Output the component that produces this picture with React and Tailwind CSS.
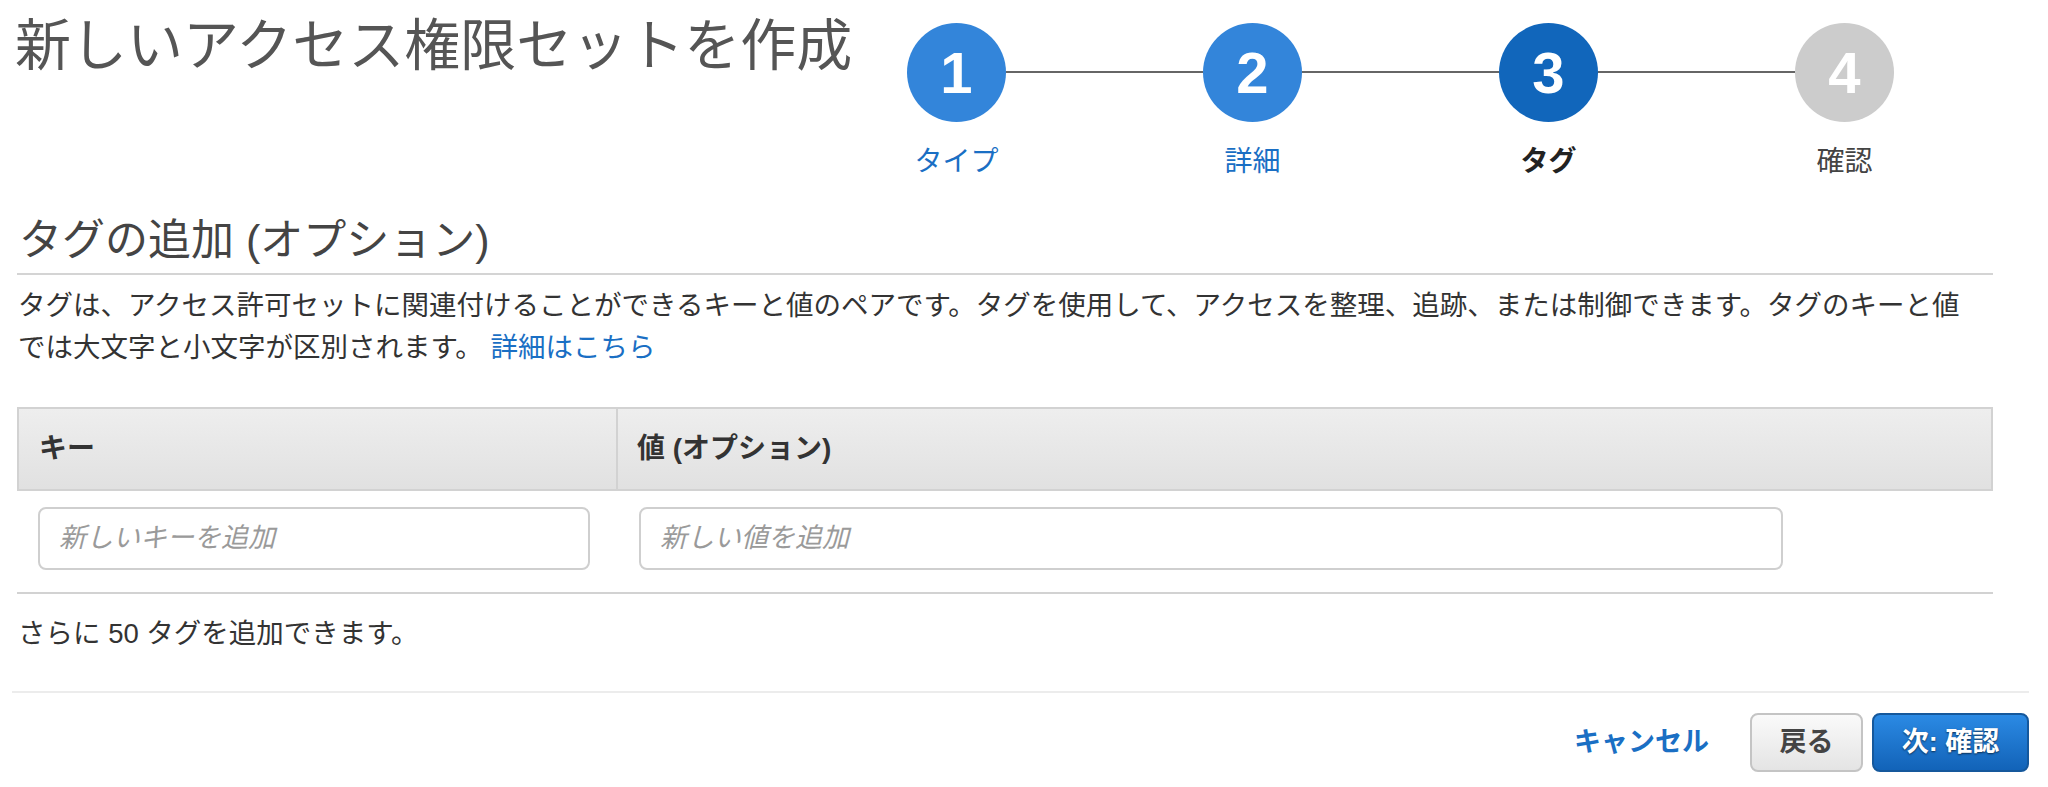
import React from "react";

const FONT = "font-['Liberation_Sans','Noto_Sans_CJK_JP',sans-serif]";

function Step({ n, label, circle, labelCls }) {
  return (
    <div className="flex flex-col items-center w-[99px] shrink-0">
      <div
        className={`w-[99px] h-[99px] rounded-full flex items-center justify-center text-white font-bold text-[58px] leading-none ${circle}`}
      >
        {n}
      </div>
      <div className={`mt-[23px] whitespace-nowrap text-[28px] leading-[34px] ${labelCls}`}>
        {label}
      </div>
    </div>
  );
}

function Line() {
  return <div className="w-[197px] h-[2px] bg-[#666] mt-[48px] shrink-0" />;
}

export default function App() {
  return (
    <div className={`${FONT} bg-white w-[2048px] h-[787px] overflow-hidden text-[#333]`}>
      <div className="ml-[17px] w-[1976px]">
        {/* header */}
        <div className="flex items-start justify-between">
          <h1 className="mt-[18px] -ml-[2px] text-[56px] leading-[56px] text-[#555] font-normal whitespace-nowrap">
            新しいアクセス権限セットを作成
          </h1>
          <div className="flex items-start mt-[23px] mr-[99px]">
            <Step n="1" label="タイプ" circle="bg-[#3385da]" labelCls="text-[#1a6fc4]" />
            <Line />
            <Step n="2" label="詳細" circle="bg-[#3385da]" labelCls="text-[#1a6fc4]" />
            <Line />
            <Step n="3" label="タグ" circle="bg-[#1166bb]" labelCls="text-[#222] font-bold" />
            <Line />
            <Step n="4" label="確認" circle="bg-[#cccccc]" labelCls="text-[#444]" />
          </div>
        </div>

        {/* section heading */}
        <h2 className="mt-[36px] pb-[8px] border-b-2 border-[#d4d4d4] text-[43px] leading-[50px] text-[#444] font-normal pl-[2px]">
          タグの追加 (オプション)
        </h2>

        <p className="mt-[10px] text-[27.5px] leading-[42px] text-[#333] pl-[1px]">
          タグは、アクセス許可セットに関連付けることができるキーと値のペアです。タグを使用して、アクセスを整理、追跡、または制御できます。タグのキーと値
          <br />
          では大文字と小文字が区別されます。 <a className="text-[#1a6fc4]" href="#">詳細はこちら</a>
        </p>

        {/* table */}
        <div className="mt-[38px]">
          <div className="flex h-[84px] border-2 border-[#d2d2d2] bg-gradient-to-b from-[#eeeeee] to-[#e1e1e1]">
            <div className="w-[599px] border-r-2 border-[#d2d2d2] flex items-center pl-[20px] text-[28px] font-bold text-[#333]">
              キー
            </div>
            <div className="flex-1 flex items-center pl-[19px] text-[28px] font-bold text-[#333]">
              値 (オプション)
            </div>
          </div>
          <div className="flex pt-[16px] pb-[22px] border-b-2 border-[#d2d2d2]">
            <div className="w-[601px] pl-[21px]">
              <input
                className="w-[552px] h-[63px] border-2 border-[#cfcfcf] rounded-[8px] px-[19px] text-[27px] italic placeholder:text-[#9a9a9a] outline-none bg-white"
                placeholder="新しいキーを追加"
              />
            </div>
            <div className="pl-[21px]">
              <input
                className="w-[1144px] h-[63px] border-2 border-[#cfcfcf] rounded-[8px] px-[19px] text-[27px] italic placeholder:text-[#9a9a9a] outline-none bg-white"
                placeholder="新しい値を追加"
              />
            </div>
          </div>
        </div>

        <div className="mt-[20px] text-[27.5px] leading-[40px] text-[#333] pl-[1px]">
          さらに 50 タグを追加できます。
        </div>
      </div>

      {/* footer */}
      <div className="ml-[12px] w-[2017px] mt-[37px] border-t-2 border-[#ececec]">
        <div className="mt-[20px] flex items-center justify-end">
          <a href="#" className="text-[27px] font-bold text-[#1a6fc4] mr-[41px]">
            キャンセル
          </a>
          <button className="w-[113px] h-[59px] rounded-[8px] border-2 border-[#c4c4c4] bg-gradient-to-b from-[#fafafa] to-[#e4e4e4] text-[27px] font-bold text-[#444]">
            戻る
          </button>
          <button className="ml-[9px] w-[157px] h-[59px] rounded-[8px] border-2 border-[#15589c] bg-gradient-to-b from-[#2b8ae4] to-[#1263b8] text-[27px] font-bold text-white [text-shadow:0_1px_2px_rgba(0,0,0,0.6)]">
            次: 確認
          </button>
        </div>
      </div>
    </div>
  );
}
